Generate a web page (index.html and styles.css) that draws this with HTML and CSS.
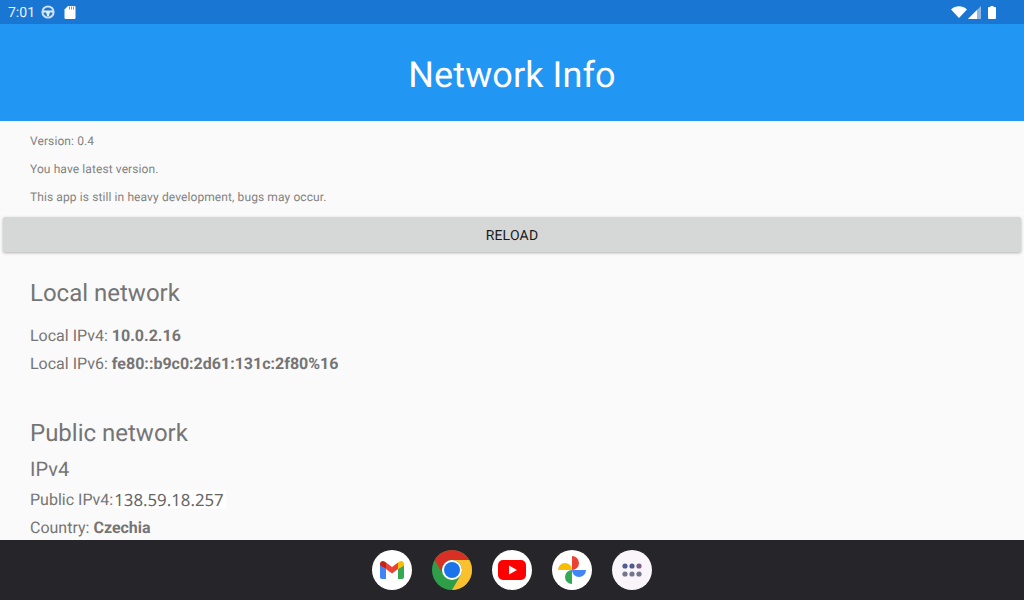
FILE: index.html
```html
<!DOCTYPE html>
<html lang="en">
<head>
  <meta charset="UTF-8">
  <meta name="viewport" content="width=device-width, initial-scale=1.0">
  <title>Network Info</title>
  <link rel="stylesheet" href="styles.css">
</head>
<body>
  <div class="status-bar">
    <div class="status-left">
      <span class="clock">7:01</span>
      <svg class="status-wheel" width="16" height="16" viewBox="0 0 16 16">
        <circle cx="8" cy="8" r="5.6" fill="none" stroke="#cfe0f5" stroke-width="2"/>
        <path d="M3 6.500h10v2.100H9.800L9 12H7l-.8-3.400H3z" fill="#e3eefa"/>
      </svg>
      <svg class="status-sd" width="12" height="14" viewBox="0 0 12 14">
        <path d="M4 1h6.500a1 1 0 0 1 1 1v11a1 1 0 0 1-1 1h-9a1 1 0 0 1-1-1V4.500z" fill="#fff"/>
        <path d="M5.500 1.500v3M7.500 1.500v3M9.500 1.500v3" stroke="#1976d2" stroke-width=".7"/>
      </svg>
    </div>
    <div class="status-right">
      <svg width="16" height="12" viewBox="0 0 16 12"><path d="M0 3.500C4.500-.8 11.500-.8 16 3.500L8 12z" fill="#fff"/></svg>
      <svg class="signal" width="13" height="13" viewBox="0 0 13 13">
        <path d="M13 0v13H0z" fill="#8db8e6"/>
        <path d="M9 4v9H0z" fill="#fff"/>
      </svg>
      <svg width="8" height="13" viewBox="0 0 8 13"><path d="M2.500 0h3v1H7a1 1 0 0 1 1 1v10a1 1 0 0 1-1 1H1a1 1 0 0 1-1-1V2a1 1 0 0 1 1-1h1.500z" fill="#fff"/></svg>
    </div>
  </div>

  <header class="app-bar">Network Info</header>

  <main class="content">
    <section class="notes">
      <p>Version: 0.4</p>
      <p>You have latest version.</p>
      <p>This app is still in heavy development, bugs may occur.</p>
    </section>

    <button class="reload">RELOAD</button>

    <section class="local">
      <h2>Local network</h2>
      <p class="row">Local IPv4: <b>10.0.2.16</b></p>
      <p class="row">Local IPv6: <b>fe80::b9c0:2d61:131c:2f80%16</b></p>
    </section>

    <section class="public">
      <h2>Public network</h2>
      <h3>IPv4</h3>
      <p class="row ip-row">Public IPv4:<span class="ip">138.59.18.257</span></p>
      <p class="row">Country: <b>Czechia</b></p>
    </section>
  </main>

  <nav class="dock">
    <span class="app">
      <svg width="24" height="18" viewBox="0 0 24 18">
        <path d="M0 4v12a2 2 0 0 0 2 2h4V8z" fill="#4285f4"/>
        <path d="M24 4v12a2 2 0 0 1-2 2h-4V8z" fill="#34a853"/>
        <path d="M6 8l6 4.500L18 8V1.500l-6 4.500L6 1.500z" fill="#ea4335"/>
        <path d="M0 4.500V3C0 .5 2.800-.8 4.800.7L6 1.500V8z" fill="#c5221f"/>
        <path d="M24 4.500V3c0-2.500-2.800-3.800-4.800-2.300L18 1.500V8z" fill="#fbbc04"/>
      </svg>
    </span>
    <span class="app chrome">
      <svg width="40" height="40" viewBox="0 0 40 40">
        <circle cx="20" cy="20" r="20" fill="#2f9e48"/>
        <path d="M2.700 10A20 20 0 0 1 37.300 10H20A10 10 0 0 0 11.300 25z" fill="#d93025"/>
        <path d="M37.300 10A20 20 0 0 1 20 40l8.700-15A10 10 0 0 0 20 10z" fill="#fbc02d"/>
        <circle cx="20" cy="20" r="10" fill="#fff"/>
        <circle cx="20" cy="20" r="8" fill="#1a73e8"/>
      </svg>
    </span>
    <span class="app">
      <svg width="28" height="20" viewBox="0 0 28 20">
        <rect width="28" height="20" rx="5" fill="#f00"/>
        <path d="M11 5.500v9l8-4.500z" fill="#fff"/>
      </svg>
    </span>
    <span class="app">
      <svg width="28" height="28" viewBox="0 0 28 28">
        <path d="M14 14V0a7 7 0 0 1 0 14z" fill="#ea4335"/>
        <path d="M14 14h14a7 7 0 0 1-14 0z" fill="#4285f4"/>
        <path d="M14 14v14a7 7 0 0 1 0-14z" fill="#34a853"/>
        <path d="M14 14H0a7 7 0 0 1 14 0z" fill="#fbbc04"/>
      </svg>
    </span>
    <span class="app apps">
      <svg width="20" height="14" viewBox="0 0 20 14">
        <circle cx="3" cy="3" r="2.600" fill="#4f5b93"/>
        <circle cx="10" cy="3" r="2.600" fill="#4f5b93"/>
        <circle cx="17" cy="3" r="2.600" fill="#7d5f86"/>
        <circle cx="3" cy="11" r="2.600" fill="#74768c"/>
        <circle cx="10" cy="11" r="2.600" fill="#74768c"/>
        <circle cx="17" cy="11" r="2.600" fill="#74768c"/>
      </svg>
    </span>
  </nav>
</body>
</html>
```

FILE: styles.css
```css
* {
  box-sizing: border-box;
}
html, body {
  height: 100%;
}
body {
  margin: 0;
  display: flex;
  flex-direction: column;
  height: 600px;
  overflow: hidden;
  background: #fafafa;
  color: #757575;
  font-family: Roboto, 'Noto Sans', sans-serif;
  text-rendering: geometricPrecision;
}
.status-bar {
  height: 24px;
  flex: none;
  display: flex;
  justify-content: space-between;
  align-items: center;
  padding: 0 28px 0 8px;
  background: #1976d2;
  color: #e8f1fb;
  font-size: 14px;
}
.status-left, .status-right {
  display: flex;
  align-items: center;
}
.clock {
  padding-top: 2px;
}
.status-wheel {
  margin-left: 5px;
}
.status-sd {
  margin-left: 8px;
}
.signal {
  margin: 0 7px 0 1px;
}
.app-bar {
  height: 97px;
  flex: none;
  display: flex;
  align-items: center;
  justify-content: center;
  padding-top: 4px;
  background: #2196f3;
  color: #fff;
  font-size: 36px;
  letter-spacing: .1px;
}
.content {
  flex: 1;
  min-height: 0;
  overflow: hidden;
}
.notes {
  padding: 13px 30px 0;
  margin-bottom: -1px;
  font-size: 12px;
  letter-spacing: .1px;
  color: #828282;
}
.notes p {
  margin: 0 0 14px;
  height: 14px;
  line-height: 14px;
}
.reload {
  display: block;
  width: 1018px;
  height: 35px;
  margin: 0 3px;
  padding: 2px 0 0;
  border: none;
  border-radius: 2px;
  background: #d6d7d7;
  box-shadow: 0 1px 3px rgba(0, 0, 0, .3);
  color: #1a1a1a;
  font-family: inherit;
  font-size: 14px;
  font-weight: 400;
  letter-spacing: .2px;
  text-rendering: geometricPrecision;
}
.local {
  padding: 25px 30px 0;
}
.public {
  padding: 39px 30px 0;
}
h2 {
  margin: 0 0 13px;
  height: 32px;
  line-height: 32px;
  font-size: 24px;
  font-weight: 400;
}
h3 {
  margin: -7px 0 3px;
  height: 28px;
  line-height: 28px;
  font-size: 20px;
  font-weight: 400;
}
.row {
  margin: 0;
  height: 28px;
  line-height: 28px;
  font-size: 16px;
}
.ip-row {
  display: flex;
  align-items: center;
}
.ip {
  margin: 0 0 2px 1px;
  padding-right: 2px;
  height: 19px;
  line-height: 19px;
  background: #fff;
  color: #666;
  font-family: 'Noto Sans', sans-serif;
  font-size: 16.800px;
}
.dock {
  height: 60px;
  flex: none;
  display: flex;
  align-items: center;
  justify-content: center;
  gap: 20px;
  background: #26252a;
}
.app {
  width: 40px;
  height: 40px;
  display: flex;
  align-items: center;
  justify-content: center;
  border-radius: 50%;
  background: #fff;
}
.chrome {
  background: none;
}
.apps {
  background: #f9f5fb;
}
```
